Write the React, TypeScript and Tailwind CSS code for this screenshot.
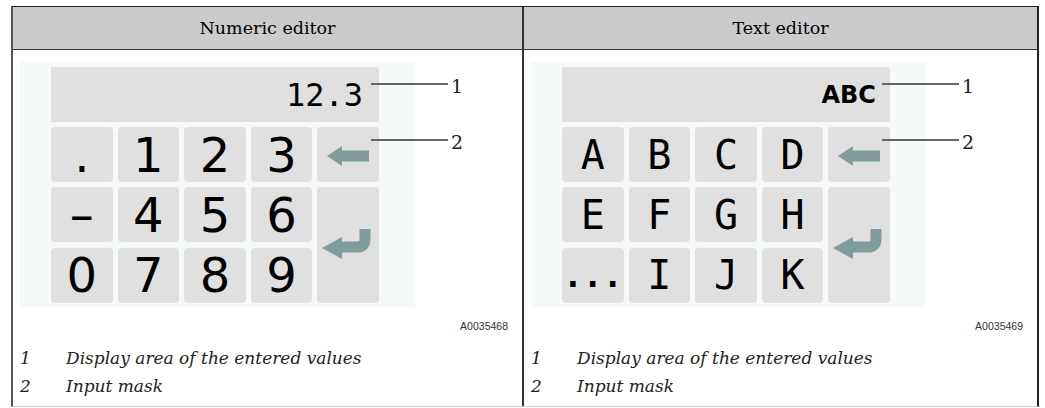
const keyFont = { fontFamily: '"DejaVu Sans", sans-serif' };

function BackArrow() {
  return (
    <svg width="61" height="55" viewBox="0 0 61 55">
      <polygon points="9,29 24,19 24,23.5 51,23.5 51,34.5 24,34.5 24,39" fill="#819c9d" />
    </svg>
  );
}

function EnterArrow() {
  return (
    <svg width="61" height="116" viewBox="0 0 61 116">
      <path d="M48 42 V52 Q48 60 40 60 H24" stroke="#819c9d" strokeWidth="11" fill="none" />
      <polygon points="5,61 25,50 25,72" fill="#819c9d" />
    </svg>
  );
}

function Key({ children, className = "" }: { children?: React.ReactNode; className?: string }) {
  return (
    <div className={`h-[55px] rounded-[4px] bg-[#e0e0e0] flex items-center justify-center text-black ${className}`}>
      {children}
    </div>
  );
}

function Panel({ display, keys, code, displayClass }: { display: string; keys: React.ReactNode[]; code: string; displayClass: string }) {
  return (
    <div className="flex flex-col">
      <div className="pl-[7px] pt-[12px]">
        <div className="relative w-[395px] h-[245px] bg-[#f5f9f7] pl-[31px] pt-[5px]">
          <div className="grid w-[328px] grid-cols-5 gap-[5px]">
            <div className={`col-span-5 h-[55px] rounded-tr-[4px] bg-[#e0e0e0] flex items-center justify-end ${displayClass}`}>
              {display}
            </div>
            {keys.slice(0, 4).map((k, i) => (
              <Key key={i}>{k}</Key>
            ))}
            <Key>
              <BackArrow />
            </Key>
            {keys.slice(4, 8).map((k, i) => (
              <Key key={i + 4}>{k}</Key>
            ))}
            <div className="row-span-2 rounded-[4px] bg-[#e0e0e0]">
              <EnterArrow />
            </div>
            {keys.slice(8, 12).map((k, i) => (
              <Key key={i + 8}>{k}</Key>
            ))}
          </div>
          <div className="absolute left-[351px] top-[21px] w-[77px] h-[2px] bg-[#666]" />
          <div className="absolute left-[351px] top-[77px] w-[77px] h-[2px] bg-[#666]" />
          <div className="absolute left-[431px] top-[10px] text-[19px] text-[#222]" style={{ fontFamily: '"DejaVu Serif", serif' }}>1</div>
          <div className="absolute left-[431px] top-[66px] text-[19px] text-[#222]" style={{ fontFamily: '"DejaVu Serif", serif' }}>2</div>
        </div>
      </div>
      <div className="mt-[12px] pr-[14px] text-right text-[10.5px] leading-[14px] text-[#333]" style={{ fontFamily: '"Liberation Sans", sans-serif' }}>
        {code}
      </div>
      <div className="mt-[14px] pl-[7px] flex flex-col gap-[5px] italic text-[17px] leading-[23px] text-[#222]" style={{ fontFamily: '"DejaVu Serif", serif' }}>
        <div className="flex">
          <span className="w-[46px]">1</span>
          <span>Display area of the entered values</span>
        </div>
        <div className="flex">
          <span className="w-[46px]">2</span>
          <span>Input mask</span>
        </div>
      </div>
    </div>
  );
}

export default function App() {
  const digitCls = "text-[48px] leading-none";
  const letterStyle = { fontFamily: '"DejaVu Sans Mono", monospace' };
  const numericKeys = [".", "1", "2", "3", "–", "4", "5", "6", "0", "7", "8", "9"].map((k) => (
    <span className={digitCls} style={keyFont}>{k}</span>
  ));
  const textKeys = ["A", "B", "C", "D", "E", "F", "G", "H", "...", "I", "J", "K"].map((k) => (
    <span className={k === "..." ? "text-[33px] leading-none font-bold" : "text-[40px] leading-none"} style={letterStyle}>
      {k}
    </span>
  ));

  return (
    <div className="w-[1045px] h-[408px] bg-white pt-[6px] pl-[11px]">
      <div className="w-[1028px] h-[401px] border-t border-t-[#222] border-l-2 border-l-[#555] border-r-2 border-r-[#222] border-b border-b-[#ccc] grid grid-cols-[511px_513px] grid-rows-[43px_1fr]">
        <div className="bg-[#cbcbcb] border-b border-b-[#333] border-r-2 border-r-[#333] flex items-center justify-center text-[17.5px] text-black" style={{ fontFamily: '"DejaVu Serif", serif' }}>
          Numeric editor
        </div>
        <div className="bg-[#cbcbcb] border-b border-b-[#333] flex items-center justify-center text-[17.5px] text-black" style={{ fontFamily: '"DejaVu Serif", serif' }}>
          Text editor
        </div>
        <div className="border-r-2 border-r-[#333]">
          <Panel display="12.3" keys={numericKeys} code="A0035468" displayClass="pr-[16px] text-[32px] text-black [font-family:'DejaVu_Sans_Mono',monospace]" />
        </div>
        <div>
          <Panel display="ABC" keys={textKeys} code="A0035469" displayClass="pr-[14px] text-[24px] font-bold text-black [font-family:'DejaVu_Sans',sans-serif]" />
        </div>
      </div>
    </div>
  );
}
